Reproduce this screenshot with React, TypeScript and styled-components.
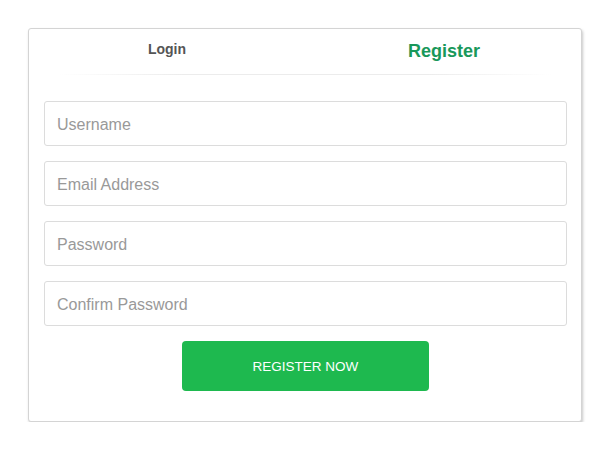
import React from "react";
import styled, { createGlobalStyle } from "styled-components";

const Global = createGlobalStyle`
  html, body { margin: 0; padding: 0; background: #fff; }
  body { font-family: "Liberation Sans", Arial, sans-serif; }
  * { box-sizing: border-box; }
`;

const Page = styled.div`
  padding: 28px 0 0 28px;
`;

const Card = styled.div`
  width: 554px;
  height: 394px;
  background: #fff;
  border: 1px solid #d4d4d4;
  border-radius: 3px;
  box-shadow: 1px 2px 3px rgba(0, 0, 0, 0.22);
  display: flex;
  flex-direction: column;
`;

const Tabs = styled.div`
  display: grid;
  grid-template-columns: 1fr 1fr;
  height: 45px;
  padding-top: 11px;
`;

const Tab = styled.div<{ $active?: boolean }>`
  text-align: center;
  font-weight: bold;
  font-size: ${(p) => (p.$active ? "18px" : "14px")};
  color: ${(p) => (p.$active ? "#19985a" : "#555")};
  line-height: ${(p) => (p.$active ? "21px" : "17px")};
  padding-top: 1px;
  padding-left: ${(p) => (p.$active ? "2px" : "0")};
  cursor: pointer;
`;

const Divider = styled.div`
  height: 1px;
  margin: 0 30px;
  background: linear-gradient(to right, rgba(230,230,230,0), #ececec 25%, #ececec 75%, rgba(230,230,230,0));
`;

const Form = styled.form`
  display: flex;
  flex-direction: column;
  gap: 15px;
  padding: 26px 14px 0 15px;
`;

const Input = styled.input`
  height: 45px;
  width: 100%;
  border: 1px solid #dcdcdc;
  border-radius: 3px;
  padding: 2px 12px 0;
  font-family: "Liberation Sans", Arial, sans-serif;
  font-size: 16px;
  color: #555;
  outline: none;
  &::placeholder { color: #999; }
`;

const Button = styled.button`
  align-self: center;
  width: 247px;
  height: 50px;
  border: none;
  border-radius: 4px;
  background: #1eb94f;
  color: #fff;
  font-family: "Liberation Sans", Arial, sans-serif;
  font-size: 13.5px;
  text-transform: uppercase;
  cursor: pointer;
`;

export default function App() {
  return (
    <>
      <Global />
      <Page>
        <Card>
          <Tabs>
            <Tab>Login</Tab>
            <Tab $active>Register</Tab>
          </Tabs>
          <Divider />
          <Form onSubmit={(e) => e.preventDefault()}>
            <Input placeholder="Username" />
            <Input placeholder="Email Address" />
            <Input placeholder="Password" type="password" />
            <Input placeholder="Confirm Password" type="password" />
            <Button type="submit">Register Now</Button>
          </Form>
        </Card>
      </Page>
    </>
  );
}
